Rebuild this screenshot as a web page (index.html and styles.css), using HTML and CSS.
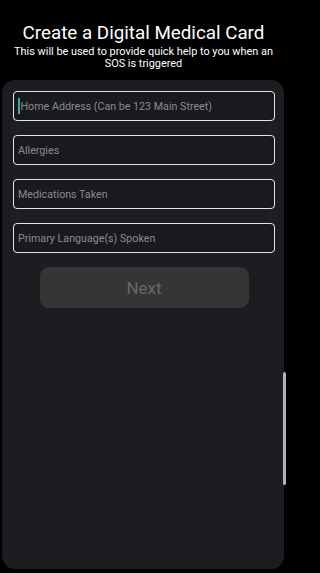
FILE: index.html
```html
<!DOCTYPE html>
<html lang="en">
<head>
<meta charset="utf-8">
<title>Create a Digital Medical Card</title>
<link rel="stylesheet" href="styles.css">
</head>
<body>
<div class="screen">
  <header class="head">
    <h1 class="title">Create a Digital Medical Card</h1>
    <p class="subtitle">This will be used to provide quick help to you when an SOS is triggered</p>
  </header>
  <main class="card">
    <div class="field focused"><span class="caret"></span><span class="ph">Home Address (Can be 123 Main Street)</span></div>
    <div class="field"><span class="ph">Allergies</span></div>
    <div class="field"><span class="ph">Medications Taken</span></div>
    <div class="field"><span class="ph">Primary Language(s) Spoken</span></div>
    <button class="next" type="button">Next</button>
  </main>
  <div class="scrollbar"></div>
</div>
</body>
</html>
```

FILE: styles.css
```css
* { box-sizing: border-box; }
html, body { margin: 0; padding: 0; background: #000; }
body {
  width: 287px;
  height: 573px;
  overflow: hidden;
  font-family: Roboto, "Noto Sans", "Liberation Sans", sans-serif;
  color: #fff;
}
.screen {
  position: relative;
  height: 573px;
  display: flex;
  flex-direction: column;
}
.head {
  padding-top: 22px;
  text-align: center;
  height: 80px;
}
.title {
  margin: 0;
  font-size: 18.8px;
  font-weight: 400;
  line-height: 23px;
}
.subtitle {
  margin: 1px auto 0;
  width: 264px;
  font-size: 10.9px;
  line-height: 12px;
  font-weight: 400;
}
.card {
  margin: 0 3px 4px 2px;
  flex: 1;
  background: #1c1d21;
  border-radius: 13px;
  padding: 11px 9px 0 11px;
  display: flex;
  flex-direction: column;
  gap: 14px;
}
.field {
  height: 30px;
  border: 1.5px solid #e4e4e4;
  border-radius: 4px;
  background: #191a1e;
  display: flex;
  align-items: center;
  padding-left: 4px;
  font-size: 10.7px;
  color: #8a8b8f;
}
.caret {
  width: 1.5px;
  height: 16px;
  background: #3fa99b;
  margin-right: 1px;
}
.next {
  margin: 0 auto;
  width: 209px;
  height: 41px;
  border: none;
  border-radius: 9px;
  background: #353535;
  color: #686868;
  font-family: Roboto, "Noto Sans", "Liberation Sans", sans-serif;
  font-size: 17px;
}
.scrollbar {
  position: absolute;
  left: 283px;
  top: 372px;
  width: 3px;
  height: 113px;
  background: #b3b3b3;
  border-radius: 2px;
}
```
